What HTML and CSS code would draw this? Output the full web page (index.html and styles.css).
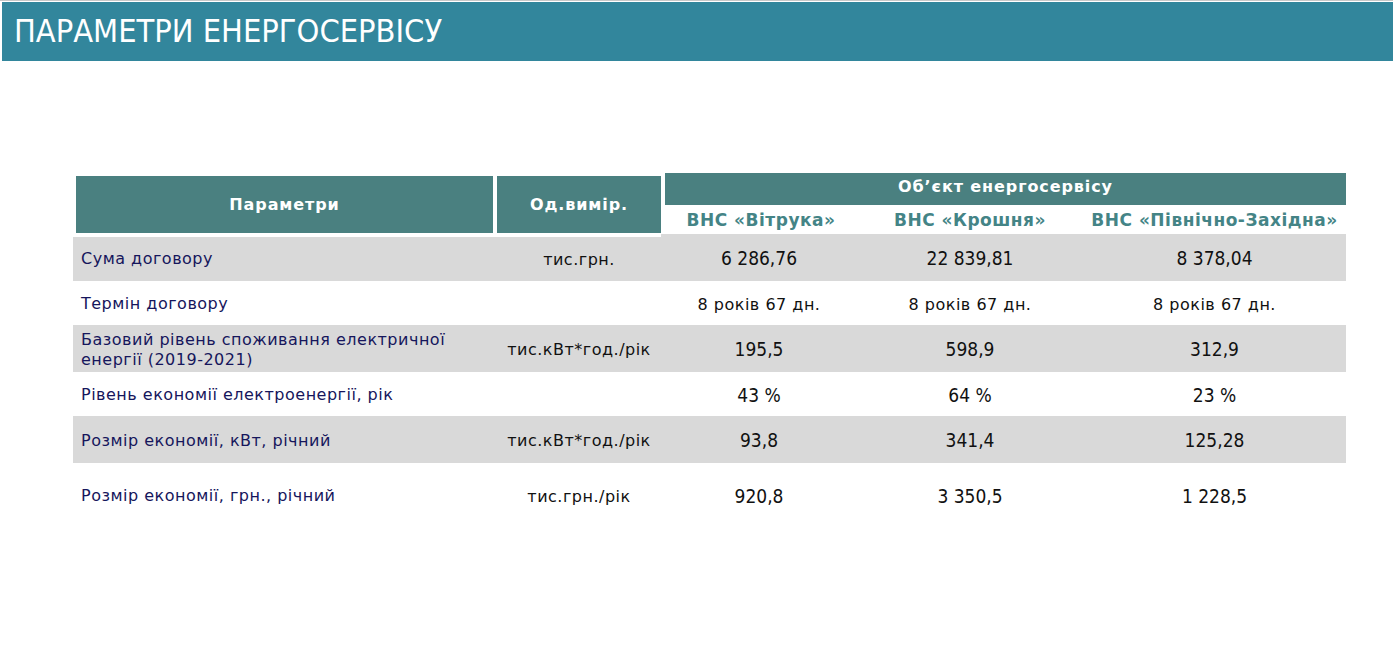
FILE: index.html
```html
<!DOCTYPE html>
<html lang="uk">
<head>
<meta charset="utf-8">
<title>Параметри енергосервісу</title>
<link rel="stylesheet" href="styles.css">
</head>
<body>
<div class="page">
  <header class="banner">
    <h1 class="banner-title">ПАРАМЕТРИ ЕНЕРГОСЕРВІСУ</h1>
  </header>
  <main class="content">
    <div class="table">
      <div class="head">
        <div class="hcell hcell-param">Параметри</div>
        <div class="hcell hcell-unit">Од.вимір.</div>
        <div class="hgroup">
          <div class="hgroup-title">Об’єкт енергосервісу</div>
          <div class="hgroup-subs">
            <div class="sub">ВНС «Вітрука»</div>
            <div class="sub">ВНС «Крошня»</div>
            <div class="sub">ВНС «Північно-Західна»</div>
          </div>
        </div>
      </div>
      <div class="row shaded first">
        <div class="c-param">Сума договору</div>
        <div class="c-unit">тис.грн.</div>
        <div class="c-num">6 286,76</div>
        <div class="c-num">22 839,81</div>
        <div class="c-num">8 378,04</div>
      </div>
      <div class="row">
        <div class="c-param">Термін договору</div>
        <div class="c-unit"></div>
        <div class="c-num c-text">8 років 67 дн.</div>
        <div class="c-num c-text">8 років 67 дн.</div>
        <div class="c-num c-text">8 років 67 дн.</div>
      </div>
      <div class="row shaded">
        <div class="c-param">Базовий рівень споживання електричної енергії (2019-2021)</div>
        <div class="c-unit">тис.кВт*год./рік</div>
        <div class="c-num">195,5</div>
        <div class="c-num">598,9</div>
        <div class="c-num">312,9</div>
      </div>
      <div class="row">
        <div class="c-param">Рівень економії електроенергії, рік</div>
        <div class="c-unit"></div>
        <div class="c-num">43 %</div>
        <div class="c-num">64 %</div>
        <div class="c-num">23 %</div>
      </div>
      <div class="row shaded">
        <div class="c-param">Розмір економії, кВт, річний</div>
        <div class="c-unit">тис.кВт*год./рік</div>
        <div class="c-num">93,8</div>
        <div class="c-num">341,4</div>
        <div class="c-num">125,28</div>
      </div>
      <div class="row last">
        <div class="c-param">Розмір економії, грн., річний</div>
        <div class="c-unit">тис.грн./рік</div>
        <div class="c-num">920,8</div>
        <div class="c-num">3 350,5</div>
        <div class="c-num">1 228,5</div>
      </div>
    </div>
  </main>
</div>
</body>
</html>
```

FILE: styles.css
```css
html, body {
  margin: 0;
  padding: 0;
  background: #ffffff;
}

.page {
  border-top: 1px solid #c8c8c8;
  padding-top: 1px;
  min-height: 667px;
  font-family: "DejaVu Sans", Verdana, sans-serif;
}

.banner {
  margin-left: 2px;
  height: 59px;
  background: #32869c;
  display: flex;
  align-items: center;
}

.banner-title {
  margin: 0 0 0 12px;
  color: #ffffff;
  font-family: "DejaVu Sans Condensed", "DejaVu Sans", sans-serif;
  font-weight: normal;
  font-size: 32.3px;
  line-height: 1;
}

.content {
  padding: 112px 0 0 73px;
}

.table {
  width: 1273px;
}

.head {
  display: grid;
  grid-template-columns: 424px 168px 681px;
  height: 61px;
}

.row {
  display: grid;
  grid-template-columns: 424px 164px 196px 226px 263px;
  height: 47px;
  align-items: center;
}

.hcell {
  background: #4a8080;
  color: #ffffff;
  font-weight: bold;
  font-size: 16px;
  letter-spacing: 0.9px;
  display: flex;
  align-items: center;
  justify-content: center;
  margin: 3px 4px 1px 0;
}

.hcell-param {
  margin-left: 3px;
}

.hgroup {
  display: flex;
  flex-direction: column;
}

.hgroup-title {
  height: 32px;
  box-sizing: border-box;
  padding-bottom: 5px;
  background: #4a8080;
  color: #ffffff;
  font-weight: bold;
  font-size: 16px;
  letter-spacing: 0.9px;
  display: flex;
  align-items: center;
  justify-content: center;
}

.hgroup-subs {
  flex: 1;
  display: grid;
  grid-template-columns: 192px 226px 263px;
  align-items: center;
}

.sub {
  text-align: center;
  color: #448486;
  font-weight: bold;
  font-size: 17px;
  letter-spacing: 0.5px;
}

.row.shaded {
  background: #d9d9d9;
}

.row:nth-child(3),
.row:nth-child(5) {
  height: 44px;
}

.row.first .c-param,
.row.first .c-unit {
  align-self: stretch;
  border-top: 3px solid #ffffff;
  display: flex;
  align-items: center;
}

.row.first .c-unit {
  justify-content: center;
}

.row.last {
  height: 64px;
}

.c-param {
  padding: 2px 6px 0 8px;
  color: #16165c;
  font-size: 16px;
  line-height: 20px;
  letter-spacing: 0.5px;
}

.c-unit {
  padding-top: 2px;
  text-align: center;
  color: #111111;
  font-size: 16px;
  letter-spacing: 0.5px;
}

.row.first .c-param,
.row.first .c-unit {
  padding-top: 0;
}

.c-num {
  text-align: center;
  color: #111111;
  font-family: "DejaVu Sans Condensed", "DejaVu Sans", sans-serif;
  font-size: 19px;
  padding-top: 1px;
}

.c-num.c-text {
  font-family: "DejaVu Sans", sans-serif;
  font-size: 16px;
  letter-spacing: 0.5px;
  padding-top: 2px;
}
```
